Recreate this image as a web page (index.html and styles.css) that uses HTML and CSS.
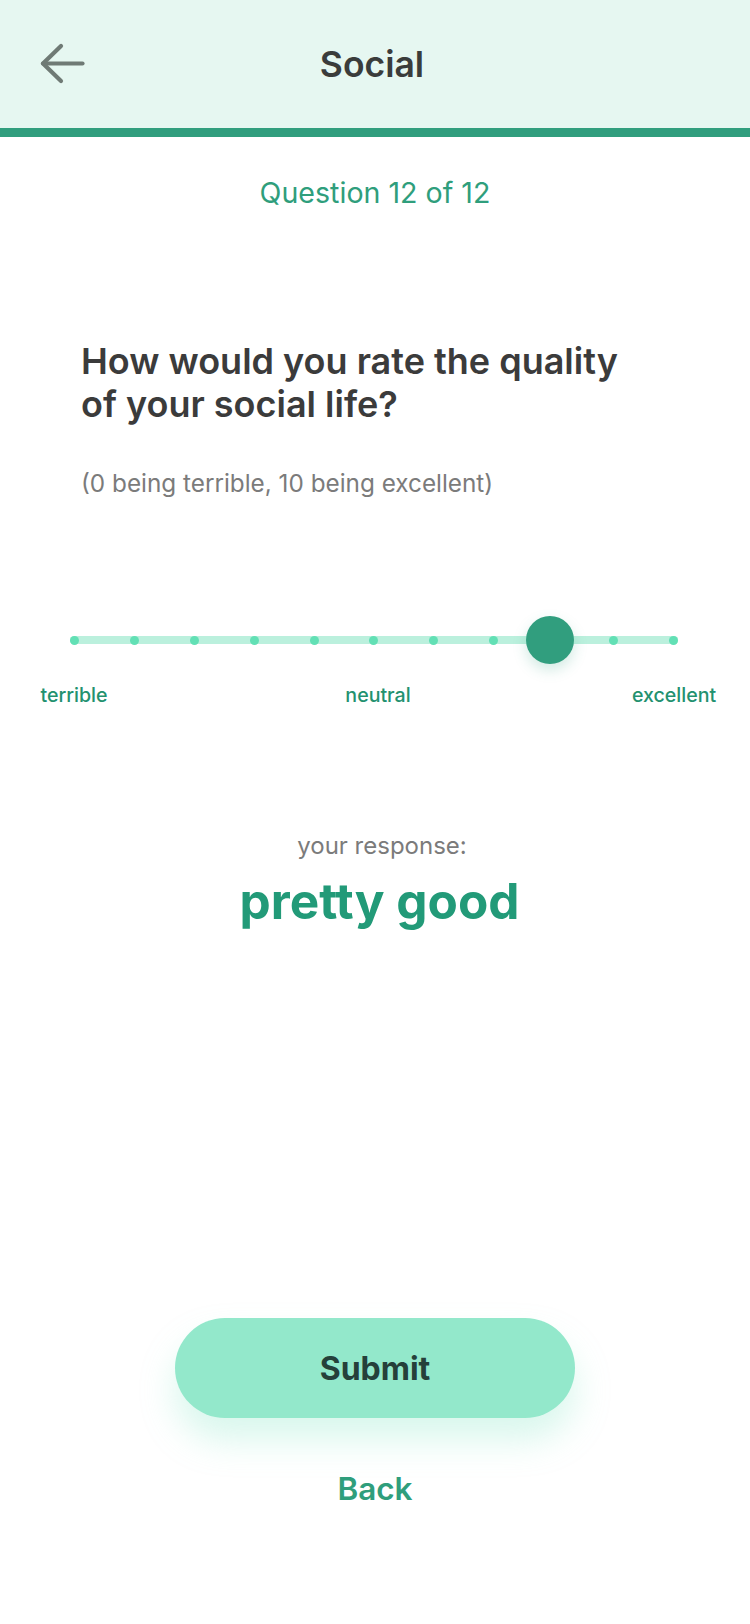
FILE: index.html
```html
<!DOCTYPE html>
<html lang="en">
<head>
<meta charset="utf-8">
<title>Social</title>
<link rel="stylesheet" href="styles.css">
</head>
<body>
<div class="screen">
  <header class="topbar">
    <button class="back-icon" aria-label="Back">
      <svg width="46" height="42" viewBox="0 0 46 42" fill="none" stroke="#6f7a75" stroke-width="4.2" stroke-linecap="round" stroke-linejoin="round">
        <path d="M21 3 L3 20.5 L21 38"/>
        <path d="M3 20.5 H42.5"/>
      </svg>
    </button>
    <h1 class="title">Social</h1>
    <div class="spacer"></div>
  </header>

  <main class="content">
    <p class="counter">Question 12 of 12</p>

    <section class="question">
      <h2 class="question-text">How would you rate the quality of your social life?</h2>
      <p class="hint">(0 being terrible, 10 being excellent)</p>
    </section>

    <div class="slider">
      <div class="track">
        <span class="dot"></span><span class="dot"></span><span class="dot"></span><span class="dot"></span><span class="dot"></span><span class="dot"></span><span class="dot"></span><span class="dot"></span><span class="dot"></span><span class="dot"></span><span class="dot"></span>
      </div>
      <span class="thumb"></span>
    </div>

    <div class="scale-labels">
      <div class="anchor"><span>terrible</span></div>
      <div class="anchor anchor-mid"><span>neutral</span></div>
      <div class="anchor"><span>excellent</span></div>
    </div>

    <p class="response-label">your response:</p>
    <p class="response-value">pretty good</p>

    <button class="submit">Submit</button>
    <button class="back-link">Back</button>
  </main>
</div>
</body>
</html>
```

FILE: styles.css
```css
* { box-sizing: border-box; }

html, body {
  margin: 0;
  padding: 0;
  background: #ffffff;
}

body {
  font-family: Inter, "Noto Sans", "Liberation Sans", sans-serif;
  width: 750px;
}

.screen {
  width: 750px;
  min-height: 1624px;
  background: #ffffff;
}

.topbar {
  height: 137px;
  background: #e6f7f1;
  border-bottom: 9px solid #319e7e;
  display: grid;
  grid-template-columns: 1fr auto 1fr;
  align-items: center;
  padding: 0 0 0 40px;
}

.back-icon {
  border: 0;
  background: none;
  padding: 0;
  margin: 0;
  width: 46px;
  height: 42px;
  display: flex;
  justify-self: start;
  margin-top: -1px;
}

.title {
  margin: 0;
  font-size: 35.5px;
  line-height: 42px;
  font-weight: 600;
  color: #3a3c3b;
  margin-left: -46px;
  margin-top: 1px;
}

.content {
  display: flex;
  flex-direction: column;
  align-items: center;
}

.counter {
  margin: 39px 0 0;
  font-size: 28.6px;
  line-height: 34px;
  font-weight: 400;
  color: #2f9e7c;
}

.question {
  align-self: flex-start;
  margin: 130px 0 0 81px;
  width: 570px;
}

.question-text {
  margin: 0;
  font-size: 36px;
  line-height: 43px;
  font-weight: 600;
  color: #3b3b3b;
}

.hint {
  margin: 43px 0 0;
  font-size: 24.3px;
  line-height: 29px;
  color: #7b7b7b;
}

.slider {
  position: relative;
  align-self: flex-start;
  margin: 118px 0 0 70px;
  width: 608px;
  height: 48px;
  display: flex;
  align-items: center;
}

.track {
  width: 100%;
  height: 8px;
  border-radius: 4px;
  background: #bbf0dd;
  display: flex;
  justify-content: space-between;
  align-items: center;
}

.dot {
  width: 9px;
  height: 9px;
  border-radius: 50%;
  background: #62e0b5;
}

.thumb {
  position: absolute;
  top: 0;
  left: 456px;
  width: 48px;
  height: 48px;
  border-radius: 50%;
  background: #319e7e;
  box-shadow: 0 6px 14px rgba(49, 158, 126, 0.22);
}

.scale-labels {
  align-self: flex-start;
  margin: 20px 0 0 74px;
  width: 600px;
  display: flex;
  justify-content: space-between;
}

.anchor {
  width: 0;
  display: flex;
  justify-content: center;
}

.anchor-mid {
  padding-left: 8px;
}

.anchor span {
  white-space: nowrap;
  font-size: 19.6px;
  line-height: 23px;
  font-weight: 500;
  color: #23916f;
}

.response-label {
  margin: 125px 0 0 14px;
  font-size: 24px;
  line-height: 28px;
  color: #7b7b7b;
}

.response-value {
  margin: 12px 0 0 9px;
  font-size: 49.5px;
  line-height: 59px;
  font-weight: 700;
  color: #229a78;
}

.submit {
  margin-top: 387px;
  width: 400px;
  height: 100px;
  border: 0;
  border-radius: 50px;
  background: #93e8cb;
  box-shadow: 0 22px 34px rgba(147, 232, 203, 0.35);
  font-family: inherit;
  font-size: 32px;
  font-weight: 700;
  color: #25403a;
  padding: 0;
}

.back-link {
  margin-top: 52px;
  border: 0;
  background: none;
  padding: 0;
  font-family: inherit;
  font-size: 31.5px;
  line-height: 38px;
  font-weight: 600;
  color: #2f9e7c;
}
```
